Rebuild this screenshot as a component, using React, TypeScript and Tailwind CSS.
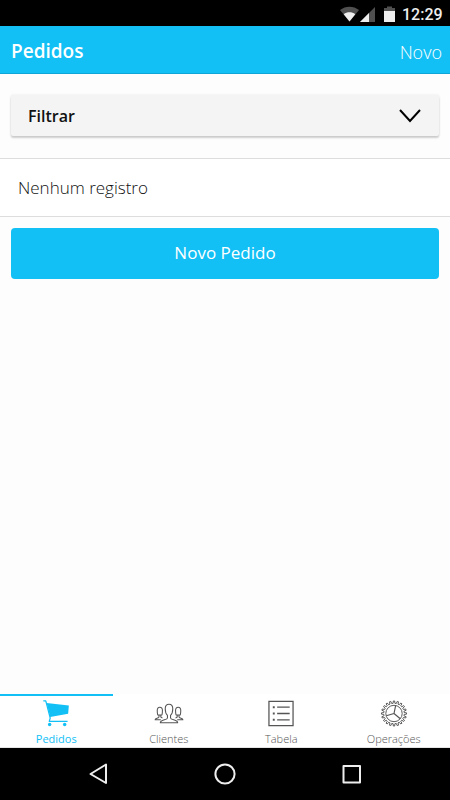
import type { ReactNode } from "react";
import { clsx } from "clsx";

const TEETH = 20;

// outline of the cog: two points on the rim and two on the tip for each tooth
function gearPath(outer: number, inner: number) {
  const step = (Math.PI * 2) / TEETH;
  const points: string[] = [];
  for (let i = 0; i < TEETH; i++) {
    const a = i * step - Math.PI / 2;
    const corners = [
      [inner, -0.28],
      [outer, -0.17],
      [outer, 0.17],
      [inner, 0.28],
    ];
    for (const [r, offset] of corners) {
      const x = 14 + r * Math.cos(a + offset * step);
      const y = 14 + r * Math.sin(a + offset * step);
      points.push(`${x.toFixed(2)} ${y.toFixed(2)}`);
    }
  }
  return `M${points.join("L")}Z`;
}

function CartIcon() {
  return (
    <svg width="28" height="28" viewBox="0 0 28 28" fill="none" aria-hidden="true">
      <path d="M4.3 3 27.3 5.7 26.600 14.200 8 17.600Z" fill="currentColor" />
      <path d="M.8 1h2.600l4.600 17.800-1 3.400H26" stroke="currentColor" strokeWidth="1.300" strokeLinejoin="round" />
      <circle cx="7.400" cy="25.500" r="1.800" fill="currentColor" />
      <circle cx="23" cy="25.500" r="1.800" fill="currentColor" />
    </svg>
  );
}

function ClientsIcon() {
  return (
    <svg width="32" height="28" viewBox="0 0 32 28" fill="none" stroke="currentColor" strokeWidth="1.100" strokeLinejoin="round" aria-hidden="true">
      <path d="M16 4.500c-2.500 0-3.900 1.600-3.900 4.500 0 3.200.7 5.500 2.300 7v2.600c0 1.100-1.400 1.400-4 2.200-2.200.7-3.400 1.100-3.400 2.700h18c0-1.600-1.200-2-3.400-2.700-2.600-.8-4-1.100-4-2.200V16c1.600-1.500 2.300-3.800 2.300-7 0-2.900-1.400-4.500-3.900-4.500Z" />
      <path d="M8.700 15.500H4.300c-.4-1.300-.5-2.800-.5-4.500 0-2.200.9-3.500 2.700-3.500S9.200 8.800 9.200 11c0 1.700-.1 3.200-.5 4.500ZM5.600 15.700v2c0 .8-.8 1-2 1.300-1.200.4-1.900.7-2 1.500h5.900M7.500 15.700v2l1.700 1.100" />
      <path d="M23.300 15.500h4.400c.4-1.300.5-2.800.5-4.500 0-2.200-.9-3.500-2.700-3.500s-2.700 1.300-2.700 3.500c0 1.700.1 3.200.5 4.500ZM26.400 15.700v2c0 .8.800 1 2 1.300 1.200.4 1.900.7 2 1.500h-5.900M24.500 15.700v2l-1.700 1.100" />
    </svg>
  );
}

function TableIcon() {
  return (
    <svg width="28" height="28" viewBox="0 0 28 28" fill="none" stroke="currentColor" aria-hidden="true">
      <path d="M1.500 1.500h25v25h-25z" strokeWidth="1.300" />
      <path d="M10 7.500h13M10 14h13M10 20.500h13" strokeWidth="1.300" />
      <path d="M5.500 7.500h2M5.500 14h2M5.500 20.500h2" strokeWidth="2" />
    </svg>
  );
}

function GearIcon() {
  return (
    <svg width="28" height="28" viewBox="0 0 28 28" fill="none" stroke="currentColor" aria-hidden="true">
      <path d={gearPath(13, 10.6)} />
      <circle cx="14" cy="14" r="8.500" />
      <path d="m14 14 1.700-8.200M14 14l-8 2.400M14 14l6.500 5.400" strokeWidth="1.200" />
    </svg>
  );
}

interface TabProps {
  label: string;
  icon: ReactNode;
  active?: boolean;
}

function Tab({ label, icon, active }: TabProps) {
  return (
    <button
      type="button"
      className={clsx(
        "flex flex-1 flex-col items-center border-t-2 pt-1 text-[11px] leading-4",
        active ? "border-[#12c0f5] text-[#12c0f5]" : "border-transparent text-[#555]",
      )}
    >
      {icon}
      <span className={clsx("mt-1", !active && "font-light")}>{label}</span>
    </button>
  );
}

function StatusBar() {
  return (
    <div className="flex h-[26px] shrink-0 items-center justify-end bg-black pt-1 pr-2 text-[#eee]">
      <svg width="58" height="18" viewBox="0 0 58 18" fill="currentColor" aria-hidden="true">
        <path d="M0 4C5.500-.5 13.500-.5 19 4L9.500 15.500Z" fill="#505050" />
        <path d="M3.700 8.200c3.400-2.600 8.200-2.600 11.600 0L9.500 15.500Z" />
        <path d="M20 16 35 1v15Z" fill="#505050" />
        <path d="M20 16l9-9v9Z" />
        <path d="M44 2h3V.5h5V2h3v4H44Z" fill="#505050" />
        <path d="M44 5h11v11H44Z" />
      </svg>
      <span className="ml-1 w-10 text-right font-['Roboto',sans-serif] text-base font-medium">12:29</span>
    </div>
  );
}

function NavigationBar() {
  return (
    <div className="flex h-[52px] shrink-0 items-center justify-center gap-[99px] bg-black text-[#eee]">
      <button type="button" aria-label="Voltar">
        <svg width="28" height="28" viewBox="0 0 28 28" fill="none" stroke="currentColor" strokeWidth="2" strokeLinejoin="round">
          <path d="M22 4.500v18.500L6.500 14Z" />
        </svg>
      </button>
      <button type="button" aria-label="Início">
        <svg width="28" height="28" viewBox="0 0 28 28" fill="none" stroke="currentColor" strokeWidth="2">
          <circle cx="14" cy="14" r="9.600" />
        </svg>
      </button>
      <button type="button" aria-label="Recentes">
        <svg width="28" height="28" viewBox="0 0 28 28" fill="none" stroke="currentColor" strokeWidth="2" strokeLinejoin="round">
          <path d="M5.500 6h16.500v16.500H5.500z" />
        </svg>
      </button>
    </div>
  );
}

export default function App() {
  return (
    <div className="flex min-h-screen flex-col bg-[#fdfdfd] font-['Open_Sans','Noto_Sans',sans-serif]">
      <StatusBar />

      <header className="flex h-12 shrink-0 items-center justify-between border-b border-[#0fa5d6] bg-[#12c0f5] pt-1 pr-2 pl-[11px] text-white">
        <h1 className="text-[19px] font-semibold">Pedidos</h1>
        <button type="button" className="text-lg font-light">
          Novo
        </button>
      </header>

      <main className="flex-1">
        <div className="px-[11px] pt-[21px] pb-[22px]">
          <button
            type="button"
            className="flex h-[41px] w-full items-center justify-between rounded-xs bg-[#f4f4f4] px-[17px] text-base font-semibold text-[#111] shadow-[0_2px_2px_rgba(0,0,0,0.18),0_0_3px_rgba(0,0,0,0.08)]"
          >
            Filtrar
            <svg width="24" height="16" viewBox="0 0 24 16" fill="none" stroke="#000" strokeWidth="2" aria-hidden="true">
              <path d="m2 2 10 11 10-11" />
            </svg>
          </button>
        </div>

        <ul className="border-y border-[#ddd] bg-white">
          <li className="px-[18px] py-4 text-[17px] leading-[25px] font-light text-[#111]">Nenhum registro</li>
        </ul>

        <div className="px-[11px] pt-[11px]">
          <button type="button" className="h-[51px] w-full rounded-sm bg-[#12c0f5] pb-0.5 text-[17px] text-white">
            Novo Pedido
          </button>
        </div>
      </main>

      <nav className="flex h-[54px] shrink-0 border-b border-[#e5e5e5] bg-white">
        <Tab label="Pedidos" icon={<CartIcon />} active />
        <Tab label="Clientes" icon={<ClientsIcon />} />
        <Tab label="Tabela" icon={<TableIcon />} />
        <Tab label="Operações" icon={<GearIcon />} />
      </nav>

      <NavigationBar />
    </div>
  );
}
